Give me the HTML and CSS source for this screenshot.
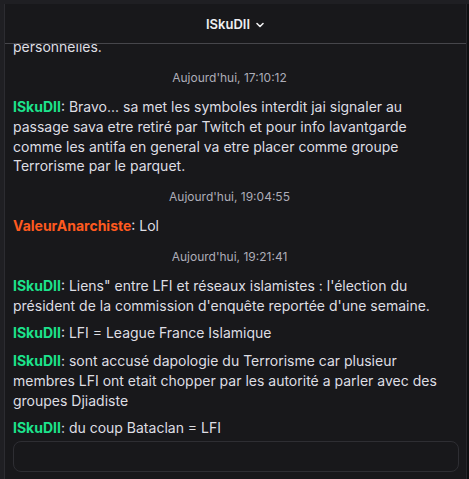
FILE: index.html
```html
<!DOCTYPE html>
<html lang="fr">
<head>
<meta charset="utf-8">
<link rel="stylesheet" href="styles.css">
</head>
<body>
<div class="page">
  <div class="side-left"></div>
  <div class="panel">
    <div class="header">
      <span class="title">ISkuDII</span>
      <svg class="chev" width="10" height="10" viewBox="0 0 10 10"><path d="M2 3.5 L5 6.5 L8 3.5" fill="none" stroke="#efeff1" stroke-width="1.6" stroke-linecap="round" stroke-linejoin="round"/></svg>
    </div>
    <div class="log">
      <div class="list">
        <div class="msg">Merci de ne pas partager vos informations<br>personnelles.</div>
        <div class="stamp">Aujourd'hui, 17:10:12</div>
        <div class="msg"><span class="u green">ISkuDII</span>: Bravo... sa met les symboles interdit jai signaler au passage sava etre retiré par Twitch et pour info lavantgarde comme les antifa en general va etre placer comme groupe Terrorisme par le parquet.</div>
        <div class="stamp">Aujourd'hui, 19:04:55</div>
        <div class="msg"><span class="u orange">ValeurAnarchiste</span>: Lol</div>
        <div class="stamp">Aujourd'hui, 19:21:41</div>
        <div class="msg"><span class="u green">ISkuDII</span>: Liens" entre LFI et réseaux islamistes : l'élection du président de la commission d'enquête reportée d'une semaine.</div>
        <div class="msg"><span class="u green">ISkuDII</span>: LFI = League France Islamique</div>
        <div class="msg"><span class="u green">ISkuDII</span>: sont accusé dapologie du Terrorisme car plusieur membres LFI ont etait chopper par les autorité a parler avec des groupes Djiadiste</div>
        <div class="msg last"><span class="u green">ISkuDII</span>: du coup Bataclan = LFI</div>
      </div>
    </div>
    <div class="composer">
      <div class="input"></div>
    </div>
  </div>
  <div class="side-right"></div>
</div>
</body>
</html>
```
FILE: styles.css
```css
html, body {
  margin: 0;
  padding: 0;
  background: #1f1f23;
  font-family: Inter, "Noto Sans", sans-serif;
  color: #dedee3;
}
.page {
  display: flex;
  height: 479px;
  width: 469px;
  padding-top: 4px;
  box-sizing: border-box;
  overflow: hidden;
}
.side-left {
  width: 4px;
  border-right: 1px solid #2c2c31;
  flex: none;
}
.panel {
  width: 461px;
  flex: none;
  background: #18181b;
  display: flex;
  flex-direction: column;
  min-height: 0;
}
.side-right {
  flex: 1;
  background: #0e0e10;
  border-left: 1px solid #26262b;
}
.header {
  flex: none;
  display: flex;
  align-items: center;
  justify-content: center;
  gap: 5px;
  border-bottom: 1px solid #46464b;
  box-sizing: border-box;
  height: 40px;
  padding-top: 1px;
}
.title {
  font-weight: 600;
  font-size: 13px;
  color: #efeff1;
}
.chev { margin-top: 1px; }
.log {
  flex: 1;
  min-height: 0;
  overflow: hidden;
  display: flex;
  flex-direction: column;
  justify-content: flex-end;
}
.list {
  padding: 0 20px 0 8px;
}
.msg {
  font-size: 14px;
  line-height: 19.75px;
  padding: 4px 0;
}
.msg.last { padding-bottom: 3px; }
.u { font-weight: 700; }
.green { color: #1ce38c; }
.orange { color: #ff5a1f; }
.stamp {
  font-size: 12px;
  line-height: 16px;
  color: #adadb8;
  text-align: center;
  padding: 9px 0 7px;
}
.composer {
  flex: none;
  padding: 0 7px 7px 8px;
}
.input {
  height: 31px;
  box-sizing: border-box;
  border: 1px solid #2e2e33;
  border-radius: 8px;
}
```
